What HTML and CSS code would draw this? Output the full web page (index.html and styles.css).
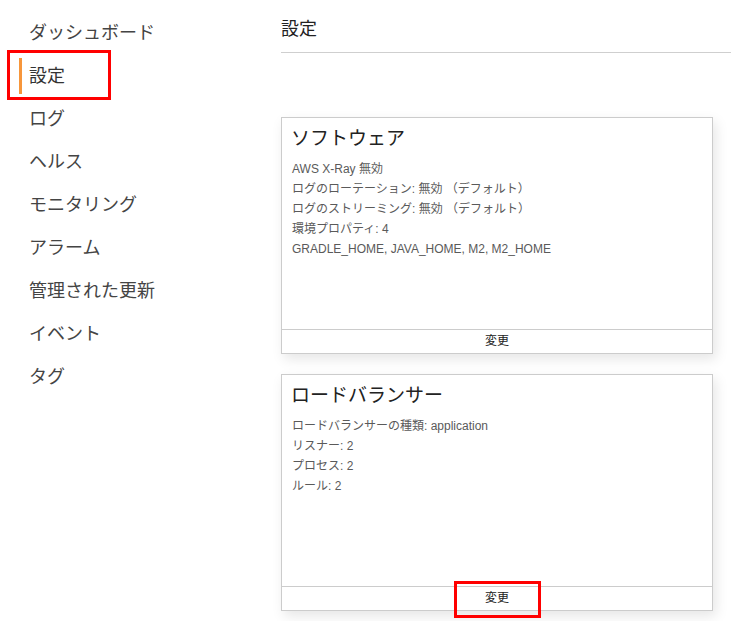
FILE: index.html
```html
<!DOCTYPE html>
<html lang="ja">
<head>
<meta charset="utf-8">
<title>設定</title>
<link rel="stylesheet" href="styles.css">
</head>
<body>
<div class="layout">
  <nav class="sidebar">
    <a class="nav-item">ダッシュボード</a>
    <a class="nav-item active">設定</a>
    <a class="nav-item">ログ</a>
    <a class="nav-item">ヘルス</a>
    <a class="nav-item">モニタリング</a>
    <a class="nav-item">アラーム</a>
    <a class="nav-item">管理された更新</a>
    <a class="nav-item">イベント</a>
    <a class="nav-item">タグ</a>
    <span class="highlight hl-nav"></span>
  </nav>
  <main class="main">
    <h1 class="page-title">設定</h1>
    <div class="cards">
      <section class="card">
        <div class="card-body">
          <h2 class="card-title">ソフトウェア</h2>
          <ul class="props">
            <li>AWS X-Ray 無効</li>
            <li>ログのローテーション: 無効 （デフォルト）</li>
            <li>ログのストリーミング: 無効 （デフォルト）</li>
            <li>環境プロパティ: 4</li>
            <li>GRADLE_HOME, JAVA_HOME, M2, M2_HOME</li>
          </ul>
        </div>
        <div class="card-footer"><button class="change-btn">変更</button></div>
      </section>
      <section class="card">
        <div class="card-body">
          <h2 class="card-title">ロードバランサー</h2>
          <ul class="props">
            <li>ロードバランサーの種類: application</li>
            <li>リスナー: 2</li>
            <li>プロセス: 2</li>
            <li>ルール: 2</li>
          </ul>
        </div>
        <div class="card-footer"><button class="change-btn">変更</button></div>
        <span class="highlight hl-btn"></span>
      </section>
    </div>
  </main>
</div>
</body>
</html>
```

FILE: styles.css
```css
html, body {
  margin: 0;
  padding: 0;
  background: #ffffff;
}

body {
  font-family: "Liberation Sans", "Noto Sans CJK JP", Arial, sans-serif;
  color: #333;
  width: 731px;
  height: 621px;
  overflow: hidden;
}

.layout {
  display: flex;
  align-items: flex-start;
}

.sidebar {
  position: relative;
  width: 281px;
  flex: none;
  display: flex;
  flex-direction: column;
  gap: 7px;
  padding-top: 15px;
}

.nav-item {
  display: block;
  margin-left: 19px;
  border-left: 3px solid transparent;
  padding-left: 7px;
  height: 36px;
  line-height: 36px;
  font-size: 18px;
  color: #444;
  text-decoration: none;
}

.nav-item.active {
  border-left-color: #f7963b;
  color: #333;
}

.highlight {
  position: absolute;
  border: 3px solid #ff0000;
  box-sizing: border-box;
  pointer-events: none;
}

.hl-nav {
  left: 7px;
  top: 50px;
  width: 104px;
  height: 50px;
}

.main {
  flex: 1;
  min-width: 0;
}

.page-title {
  margin: 0;
  padding: 17px 0 11px;
  font-size: 18px;
  font-weight: normal;
  line-height: 24px;
  color: #222;
  border-bottom: 1px solid #cfcfcf;
}

.cards {
  display: flex;
  flex-direction: column;
  gap: 20px;
  padding-top: 64px;
  width: 432px;
}

.card {
  position: relative;
  height: 237px;
  box-sizing: border-box;
  border: 1px solid #cccccc;
  background: #fff;
  display: flex;
  flex-direction: column;
  box-shadow: 3px 5px 12px rgba(0, 0, 0, 0.10);
}

.card-body {
  flex: 1;
  padding: 7px 9px 0;
}

.card-title {
  margin: 0;
  font-size: 19px;
  font-weight: normal;
  line-height: 28px;
  color: #222;
}

.props {
  list-style: none;
  margin: 6px 0 0 1px;
  padding: 0;
  font-size: 12px;
  line-height: 20px;
  color: #5a5a5a;
}

.card-footer {
  height: 23px;
  border-top: 1px solid #cccccc;
  display: flex;
  justify-content: center;
  align-items: center;
}

.change-btn {
  border: none;
  background: none;
  padding: 0;
  font-family: inherit;
  font-size: 12px;
  color: #222;
  line-height: 23px;
}

.hl-btn {
  left: 172px;
  bottom: -8px;
  width: 87px;
  height: 37px;
}
```
